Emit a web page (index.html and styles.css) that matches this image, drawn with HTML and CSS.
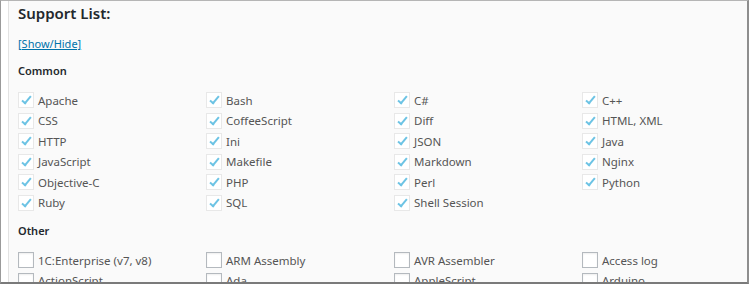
FILE: index.html
```html
<!DOCTYPE html>
<html lang="en">
<head>
  <meta charset="UTF-8" />
  <title>Support List</title>
  <link rel="stylesheet" href="styles.css">
</head>
<body>
  <div class="frame">
    <div class="panel">
      <h3>Support List:</h3>
      <p class="toggle"><a href="#">[Show/Hide]</a></p>

      <h4>Common</h4>
      <div class="lang-grid">
        <label class="lang"><span class="box on"></span>Apache</label>
        <label class="lang"><span class="box on"></span>Bash</label>
        <label class="lang"><span class="box on"></span>C#</label>
        <label class="lang"><span class="box on"></span>C++</label>
        <label class="lang"><span class="box on"></span>CSS</label>
        <label class="lang"><span class="box on"></span>CoffeeScript</label>
        <label class="lang"><span class="box on"></span>Diff</label>
        <label class="lang"><span class="box on"></span>HTML, XML</label>
        <label class="lang"><span class="box on"></span>HTTP</label>
        <label class="lang"><span class="box on"></span>Ini</label>
        <label class="lang"><span class="box on"></span>JSON</label>
        <label class="lang"><span class="box on"></span>Java</label>
        <label class="lang"><span class="box on"></span>JavaScript</label>
        <label class="lang"><span class="box on"></span>Makefile</label>
        <label class="lang"><span class="box on"></span>Markdown</label>
        <label class="lang"><span class="box on"></span>Nginx</label>
        <label class="lang"><span class="box on"></span>Objective-C</label>
        <label class="lang"><span class="box on"></span>PHP</label>
        <label class="lang"><span class="box on"></span>Perl</label>
        <label class="lang"><span class="box on"></span>Python</label>
        <label class="lang"><span class="box on"></span>Ruby</label>
        <label class="lang"><span class="box on"></span>SQL</label>
        <label class="lang"><span class="box on"></span>Shell Session</label>
      </div>

      <h4>Other</h4>
      <div class="lang-grid">
        <label class="lang"><span class="box"></span>1C:Enterprise (v7, v8)</label>
        <label class="lang"><span class="box"></span>ARM Assembly</label>
        <label class="lang"><span class="box"></span>AVR Assembler</label>
        <label class="lang"><span class="box"></span>Access log</label>
        <label class="lang"><span class="box"></span>ActionScript</label>
        <label class="lang"><span class="box"></span>Ada</label>
        <label class="lang"><span class="box"></span>AppleScript</label>
        <label class="lang"><span class="box"></span>Arduino</label>
      </div>
    </div>
  </div>
</body>
</html>
```

FILE: styles.css
```css
html, body {
  margin: 0;
  height: 100%;
  overflow: hidden;
}
body {
  font-family: "Noto Sans", "Open Sans", sans-serif;
  font-size: 12px;
  color: #444;
}
.frame {
  height: 284px;
  box-sizing: border-box;
  border-top: 1px solid #b5b5b5;
  border-left: 1px solid #9a9a9a;
  border-right: 2px solid #8e8e8e;
  border-bottom: 2px solid #7a7a7a;
  background: #fff;
  padding-left: 7px;
  overflow: hidden;
}
.panel {
  height: 100%;
  background: #fafafa;
  border-left: 1px solid #e2e2e2;
  padding: 2px 0 0 9px;
}
h3 {
  margin: 0;
  font-size: 15px;
  font-weight: 600;
  color: #23282d;
  line-height: 20px;
}
.toggle {
  margin: 12px 0 0;
  line-height: 18px;
}
.toggle a {
  color: #0073aa;
  font-size: 11px;
}
h4 {
  margin: 9px 0 10px;
  font-size: 11px;
  font-weight: 600;
  color: #23282d;
  line-height: 18px;
}
.lang-grid {
  display: grid;
  grid-template-columns: repeat(4, 188px);
  grid-auto-rows: 20.5px;
}
.lang {
  display: flex;
  align-items: center;
  gap: 4px;
  font-size: 11.5px;
  color: #555;
  white-space: nowrap;
}
.box {
  width: 14px;
  height: 14px;
  border: 1px solid #b4b9be;
  background: #fff;
  box-shadow: inset 0 1px 2px rgba(0,0,0,0.07);
  position: relative;
  flex: none;
}
.box.on {
  border-color: #e8e8e8;
  box-shadow: none;
}
.box.on::after {
  content: "";
  position: absolute;
  left: 5px;
  top: 1px;
  width: 3px;
  height: 8px;
  border-right: 2px solid #6cc3e4;
  border-bottom: 2px solid #6cc3e4;
  transform: rotate(40deg);
}
```
